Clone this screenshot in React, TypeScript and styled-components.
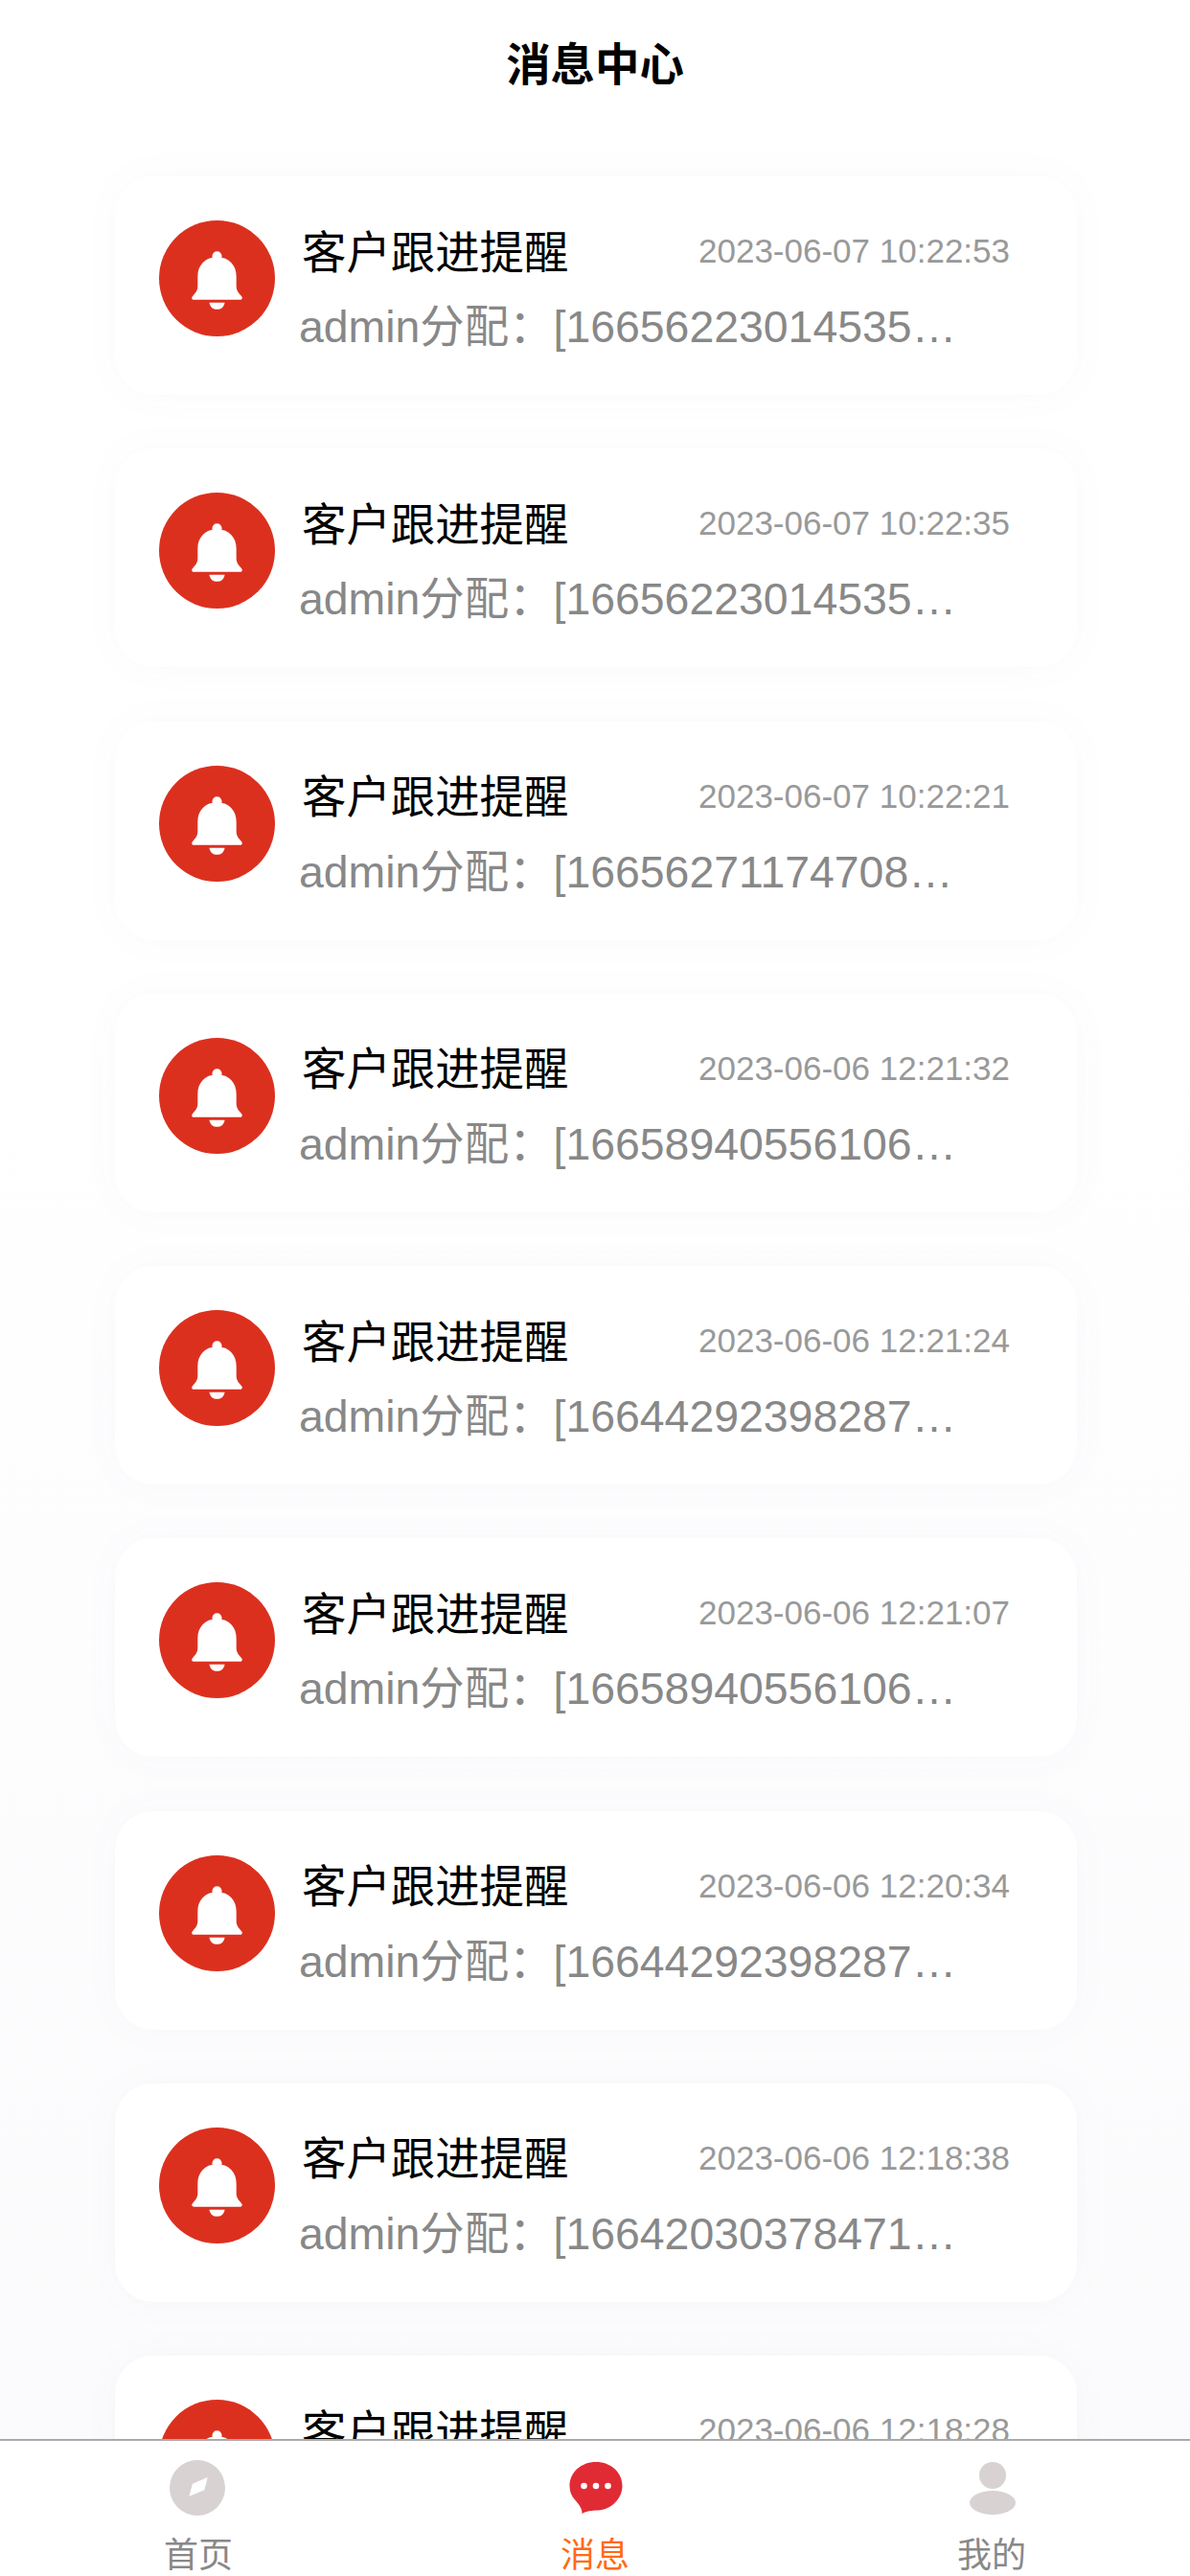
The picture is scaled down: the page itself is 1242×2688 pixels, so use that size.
import React from 'react';
import styled, { createGlobalStyle } from 'styled-components';

const GlobalStyle = createGlobalStyle`
  html, body {
    margin: 0;
    padding: 0;
    background: #fff;
    font-family: "Liberation Sans", "Noto Sans CJK SC", sans-serif;
  }
`;

const Page = styled.div`
  display: flex;
  flex-direction: column;
  width: 1242px;
  height: 2688px;
  overflow: hidden;
`;
const Content = styled.div`
  flex: 1;
  min-height: 0;
  overflow: hidden;
  background: linear-gradient(#fff 0%, #fff 40%, #fbfbfd 100%);
`;
const Header = styled.h1`
  margin: 0;
  height: 137px;
  line-height: 137px;
  text-align: center;
  font-size: 46.4px;
  font-weight: 700;
  color: #000;
`;
const List = styled.div`
  display: flex;
  flex-direction: column;
  gap: 56.25px;
  padding: 47px 118px 0 120px;
`;
const Card = styled.div`
  display: flex;
  align-items: flex-start;
  flex-shrink: 0;
  gap: 25px;
  height: 228px;
  box-sizing: border-box;
  padding: 38px 70px 0 46px;
  background: #fff;
  border-radius: 40px;
  box-shadow: 0 0 40px rgba(120, 120, 170, 0.035);
`;
const BellBadge = styled.svg`
  flex-shrink: 0;
  display: block;
  width: 121px;
  height: 121px;
  margin-top: 8px;
`;
const Body = styled.div`
  flex: 1;
  min-width: 0;
`;
const TopRow = styled.div`
  display: flex;
  justify-content: space-between;
  align-items: center;
  height: 80px;
`;
const Title = styled.span`
  margin: 0 0 6px 3px;
  font-size: 46.4px;
  color: #000;
`;
const Time = styled.span`
  font-size: 35px;
  color: #999;
`;
const Message = styled.div`
  height: 78px;
  line-height: 78px;
  font-size: 46.4px;
  color: #888;
  white-space: nowrap;
  overflow: hidden;
`;
const TabBar = styled.div`
  display: grid;
  grid-template-columns: repeat(3, 1fr);
  flex-shrink: 0;
  height: 143px;
  box-sizing: border-box;
  background: #fff;
  border-top: 2px solid #aaa;
`;
const Tab = styled.div`
  display: flex;
  flex-direction: column;
  align-items: center;
  padding-top: 20px;
`;
const TabIcon = styled.svg`
  display: block;
  width: 60px;
  height: 60px;
`;
const TabLabel = styled.span<{ $active?: boolean }>`
  margin-top: 18px;
  font-size: 36px;
  line-height: 44px;
  color: ${(props) => (props.$active ? '#ff6a13' : '#888')};
`;

const notices = [
  { time: '2023-06-07 10:22:53', id: '16656223014535' },
  { time: '2023-06-07 10:22:35', id: '16656223014535' },
  { time: '2023-06-07 10:22:21', id: '16656271174708' },
  { time: '2023-06-06 12:21:32', id: '16658940556106' },
  { time: '2023-06-06 12:21:24', id: '16644292398287' },
  { time: '2023-06-06 12:21:07', id: '16658940556106' },
  { time: '2023-06-06 12:20:34', id: '16644292398287' },
  { time: '2023-06-06 12:18:38', id: '16642030378471' },
  { time: '2023-06-06 12:18:28', id: '16642030378471' },
];

const Bell = () => (
  <BellBadge viewBox="0 0 120 120">
    <circle cx="60" cy="60" r="60" fill="#dc301f" />
    <circle cx="60" cy="37" r="5" fill="#fff" />
    <path
      fill="#fff"
      d="M60 38C47 38 40 47 40 58V68C40 73 37 76 35 78C33 80 34 82 36 82H84C86 82 87 80 85 78C83 76 80 73 80 68V58C80 47 73 38 60 38Z"
    />
    <path fill="#fff" d="M52 85H68C67 90 64 92 60 92C56 92 53 90 52 85Z" />
  </BellBadge>
);

const App = () => {
  return (
    <Page>
      <GlobalStyle />
      <Content>
        <Header>消息中心</Header>
        <List>
          {notices.map((item) => (
            <Card key={item.time}>
              <Bell />
              <Body>
                <TopRow>
                  <Title>客户跟进提醒</Title>
                  <Time>{item.time}</Time>
                </TopRow>
                <Message>admin分配：[{item.id}…</Message>
              </Body>
            </Card>
          ))}
        </List>
      </Content>
      <TabBar>
        <Tab>
          <TabIcon viewBox="0 0 60 60">
            <circle cx="29" cy="29" r="29" fill="#d8d2d2" />
            <path fill="#fff" d="M39.700 18L36.300 31.300L20.300 38L24 24.700Z" />
          </TabIcon>
          <TabLabel>首页</TabLabel>
        </Tab>
        <Tab>
          <TabIcon viewBox="0 0 60 60">
            <path
              fill="#e02b35"
              d="M31 2C46 2 58.500 12.500 58.500 27C58.500 41 46 52 33 52.500C26 52.800 21 53 16.500 56C17 51 13 46 9.500 42C5.500 38 3.500 33 3.500 27C3.500 12.500 16 2 31 2Z"
            />
            <circle cx="18.500" cy="27" r="3.300" fill="#fff" />
            <circle cx="31" cy="27" r="3.300" fill="#fff" />
            <circle cx="43.500" cy="27" r="3.300" fill="#fff" />
          </TabIcon>
          <TabLabel $active>消息</TabLabel>
        </Tab>
        <Tab>
          <TabIcon viewBox="0 0 60 60">
            <circle cx="31" cy="16" r="14" fill="#d8d2d2" />
            <ellipse cx="31" cy="44.500" rx="24" ry="12.500" fill="#d8d2d2" />
          </TabIcon>
          <TabLabel>我的</TabLabel>
        </Tab>
      </TabBar>
    </Page>
  );
};

export default App;
